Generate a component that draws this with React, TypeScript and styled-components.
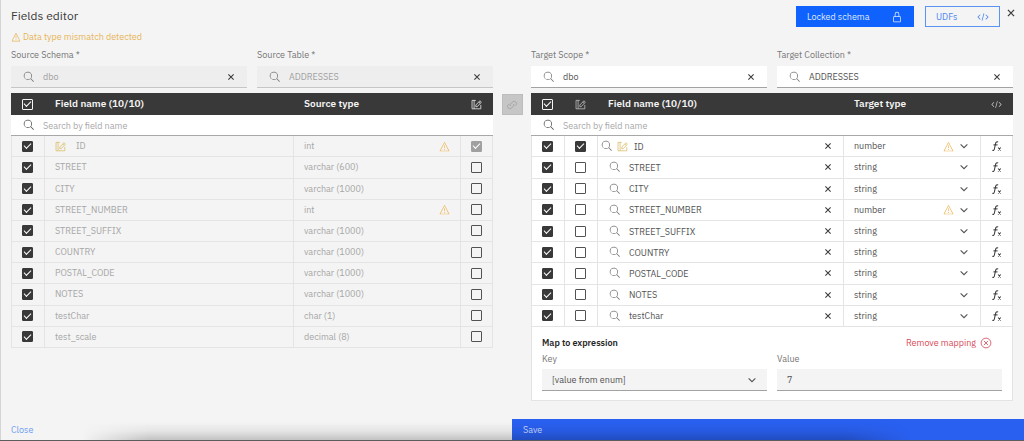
import React from "react";
import styled, { createGlobalStyle, css } from "styled-components";

const GlobalStyle = createGlobalStyle`
  *, *::before, *::after { box-sizing: border-box; }
  body {
    margin: 0;
    background: #f4f4f4;
    color: #393939;
    font-family: "IBM Plex Sans", "Inter", "Liberation Sans", sans-serif;
    font-size: 9px;
    line-height: 12px;
  }
  button, input, select { font: inherit; color: inherit; margin: 0; }
`;

/* ---------- icons ---------- */

const Svg = styled.svg<{ $size?: number; $color?: string }>`
  display: block;
  flex: none;
  width: ${(p) => p.$size ?? 12}px;
  height: ${(p) => p.$size ?? 12}px;
  fill: currentColor;
  color: ${(p) => p.$color ?? "inherit"};
`;

type IconProps = { size?: number; color?: string };

const makeIcon = (paths: string[]) => ({ size, color }: IconProps) => (
  <Svg viewBox="0 0 32 32" $size={size} $color={color} aria-hidden="true">
    {paths.map((d) => (
      <path key={d} d={d} />
    ))}
  </Svg>
);

const makeLineIcon = (paths: string[], width = 2.2) => ({ size, color }: IconProps) => (
  <Svg viewBox="0 0 32 32" $size={size} $color={color} aria-hidden="true">
    {paths.map((d) => (
      <path key={d} d={d} fill="none" stroke="currentColor" strokeWidth={width} />
    ))}
  </Svg>
);

const SearchIcon = makeIcon([
  "M29 27.586l-7.552-7.552a11.018 11.018 0 1 0-1.414 1.414L27.586 29ZM4 13a9 9 0 1 1 9 9A9.01 9.01 0 0 1 4 13Z",
]);
const CloseIcon = makeLineIcon(["M9 9l14 14M23 9l-14 14"], 2.8);
const ChevronIcon = makeLineIcon(["M7 11.5l9 9 9-9"], 2.8);
const WarningIcon = makeIcon([
  "M16 23a1.5 1.5 0 1 0 1.5 1.5A1.5 1.5 0 0 0 16 23Z",
  "M15 12h2v9h-2z",
  "M29 30H3a1 1 0 0 1-.887-1.461l13-25a1 1 0 0 1 1.774 0l13 25A1 1 0 0 1 29 30ZM4.65 28h22.7L16.002 6.171h-.004Z",
]);
const LockIcon = makeIcon([
  "M24 14h-2V8A6 6 0 0 0 10 8v6H8a2 2 0 0 0-2 2v12a2 2 0 0 0 2 2h16a2 2 0 0 0 2-2V16a2 2 0 0 0-2-2ZM12 8a4 4 0 0 1 8 0v6h-8ZM24 28H8V16h16Z",
]);
const CodeIcon = makeIcon([
  "M31 16l-7 7-1.41-1.41L28.17 16l-5.58-5.59L24 9l7 7z",
  "M1 16l7-7 1.41 1.41L3.83 16l5.58 5.59L8 23l-7-7z",
  "M12.42 25.48l5.2-19.4 1.93.52-5.2 19.4z",
]);
const EditIcon = makeLineIcon([
  "M14 4H3v24.5h25.500V17",
  "M9 4v24.5",
  "M14 22.5v-5L26 5l4 4L18 22.5z",
  "M22.500 8.500l4 4",
]);
const RemoveIcon = makeLineIcon(["M16 3a13 13 0 1 0 0 26a13 13 0 1 0 0-26z", "M10.5 10.5l11 11M21.5 10.5l-11 11"]);
const LinkIcon = makeLineIcon([
  "M12 19a6 5.500 0 0 1 1-7l3-2.500a6.500 6.500 0 0 1 12 2c.5 3-1.500 5-4.500 7",
  "M20 13a6 5.500 0 0 1-1 7l-3 2.500a6.500 6.500 0 0 1-12-2c-.5-3 1.500-5 4.500-7",
]);
const FxIcon = makeLineIcon([
  "M19 5.500c-3.500-1.500-6 0-6.800 4L9 24c-.8 3.500-2.500 4.500-5.500 3.500",
  "M6.500 13h11",
  "M19 20l7 8M26 20l-7 8",
], 2.8);

/* ---------- page frame ---------- */

const Page = styled.form`
  display: flex;
  flex-direction: column;
  min-height: 100vh;
  box-shadow: inset 1px 0 0 #d4d4d4;
  border-bottom: 1px solid #5c5c5c;
  position: relative;
  overflow: hidden;
`;

const Header = styled.header`
  display: flex;
  justify-content: space-between;
  align-items: flex-start;
  height: 31px;
  padding: 6px 6px 0 11px;
`;

const Title = styled.h1`
  margin: 0;
  font-size: 12px;
  line-height: 20px;
  font-weight: 400;
`;

const Actions = styled.div`
  display: flex;
  gap: 11px;
`;

const ActionButton = styled.button<{ $primary?: boolean }>`
  display: flex;
  align-items: center;
  justify-content: space-between;
  width: ${(p) => (p.$primary ? 118 : 75)}px;
  height: 21px;
  padding: 0 10px;
  border: 1px solid ${(p) => (p.$primary ? "#0f62fe" : "#5b93f5")};
  background: ${(p) => (p.$primary ? "#0f62fe" : "transparent")};
  color: ${(p) => (p.$primary ? "#dfe9ff" : "#4b86f0")};
`;

const IconButton = styled.button`
  display: grid;
  place-items: center;
  flex: none;
  width: 14px;
  height: 14px;
  padding: 0;
  border: 0;
  background: none;
  color: #393939;
`;

const CloseWrap = styled.div`
  margin-left: -7px;
`;

const Notice = styled.p`
  display: flex;
  align-items: center;
  gap: 2px;
  margin: 0;
  padding-left: 11px;
  line-height: 12px;
  color: #e8b557;
`;

const Columns = styled.main`
  flex: 1;
  display: grid;
  grid-template-columns: minmax(0, 1fr) 38px minmax(0, 1fr);
  align-items: start;
  padding: 6px 11px 0;
`;

const FieldPair = styled.div`
  display: grid;
  grid-template-columns: 1fr 1fr;
  gap: 10px;
`;

const Field = styled.div`
  min-width: 0;
`;

const Label = styled.label`
  display: block;
  color: #767676;
`;

/* ---------- inputs ---------- */

const InputBox = styled.div<{ $tone: "disabled" | "white" | "grey" }>`
  display: flex;
  align-items: center;
  height: 22px;
  margin-top: ${(p) => (p.$tone === "grey" ? 4 : 5)}px;
  padding: 0 9px 0 ${(p) => (p.$tone === "grey" ? 10 : 12)}px;
  border-bottom: 1px solid ${(p) => (p.$tone === "disabled" ? "#c6c6c6" : "#a2a2a2")};
  background: ${(p) => ({ disabled: "#eeeeee", white: "#ffffff", grey: "#f4f4f4" })[p.$tone]};
  color: ${(p) => (p.$tone === "disabled" ? "#a0a0a0" : "#525252")};
`;

const plainControl = css`
  flex: 1;
  min-width: 0;
  width: 100%;
  height: 18px;
  padding: 0;
  border: 0;
  outline: 0;
  background: transparent;
  appearance: none;
`;

const TextInput = styled.input<{ $indent?: number }>`
  ${plainControl}
  margin-left: ${(p) => p.$indent ?? 8}px;
  &::placeholder { color: #a8a8a8; opacity: 1; }
`;

const Select = styled.select`
  ${plainControl}
`;

const Checkbox = styled.input<{ $muted?: boolean; $outline?: boolean }>`
  appearance: none;
  display: grid;
  place-items: center;
  width: 11px;
  height: 11px;
  margin: 0 auto;
  border: 1px solid ${(p) => (p.$outline ? "#f4f4f4" : "#525252")};
  border-radius: 1px;
  &:checked {
    background: ${(p) => (p.$outline ? "transparent" : p.$muted ? "#a0a0a0" : "#393939")};
    border-color: ${(p) => (p.$outline ? "#f4f4f4" : p.$muted ? "#a0a0a0" : "#393939")};
  }
  &:checked::before {
    content: "";
    width: 7px;
    height: 4px;
    margin-top: -2px;
    border-left: 1px solid #ffffff;
    border-bottom: 1px solid #ffffff;
    transform: rotate(-45deg);
  }
`;

/* ---------- tables ---------- */

const TableWrap = styled.section`
  margin-top: 5px;
`;

const Table = styled.table<{ $live?: boolean; $height: number }>`
  width: 100%;
  height: ${(p) => p.$height}px;
  table-layout: fixed;
  border-collapse: separate;
  border-spacing: 0;
  background: ${(p) => (p.$live ? "#ffffff" : "#f4f4f4")};
  color: ${(p) => (p.$live ? "#525252" : "#a6a6a6")};
`;

const HeadRow = styled.tr`
  height: 22px;
`;

const BodyRow = styled.tr`
  height: 21px;
`;

const Th = styled.th`
  padding: 0 0 0 11px;
  background: #393939;
  color: #f4f4f4;
  font-size: 10px;
  font-weight: 600;
  text-align: left;
`;

const IconTh = styled(Th)`
  padding: 0;
  & > svg { margin: 0 auto; }
`;

const SearchTd = styled.td`
  padding: 0 12px;
  background: #ffffff;
  border-bottom: 1px solid #a8a8a8;
`;

const Td = styled.td`
  padding: 0 0 0 10px;
  border-bottom: 1px solid #e4e4e4;
  border-left: 1px solid #e4e4e4;
  &:last-child { border-right: 1px solid #e4e4e4; }
`;

const IconTd = styled(Td)`
  padding: 0 1px 0 0;
  &:last-child { padding: 0; }
  & > svg, & > button { margin: 0 auto; }
`;

const CellRow = styled.div<{ $gap?: number; $inset?: number; $end?: number }>`
  display: flex;
  align-items: center;
  gap: ${(p) => p.$gap ?? 0}px;
  padding-left: ${(p) => p.$inset ?? 0}px;
  padding-right: ${(p) => p.$end ?? 0}px;
`;

const Grow = styled.span`
  flex: 1;
`;

const NameTd = styled(Td)`
  padding: 0 8px 0 3px;
`;

const LinkButton = styled.button`
  display: grid;
  place-items: center;
  justify-self: center;
  width: 21px;
  height: 21px;
  margin-top: 45px;
  padding: 0;
  border: 1px solid #bdbdbd;
  background: #c6c6c6;
  color: #a0a0a0;
`;

/* ---------- mapping panel ---------- */

const Mapping = styled.section`
  padding: 8px 10px 9px;
  border: 1px solid #e4e4e4;
  border-top: 0;
  background: #ffffff;
`;

const MappingHead = styled.div`
  display: flex;
  align-items: center;
  justify-content: space-between;
  padding-right: 10px;
  margin-bottom: 2px;
`;

const MappingTitle = styled.h2`
  margin: 0;
  font-size: 9px;
  line-height: 16px;
  font-weight: 600;
  color: #262626;
`;

const RemoveButton = styled.button`
  display: flex;
  align-items: center;
  gap: 4px;
  padding: 0;
  border: 0;
  background: none;
  color: #d94a58;
`;

/* ---------- footer ---------- */

const Footer = styled.footer`
  display: grid;
  grid-template-columns: 1fr 1fr;
`;

const FooterButton = styled.button<{ $primary?: boolean }>`
  height: 21px;
  padding: 0 11px;
  border: 0;
  text-align: left;
  background: ${(p) => (p.$primary ? "#2a60f0" : "transparent")};
  color: ${(p) => (p.$primary ? "#c9d8ff" : "#6f9df2")};
`;

const BottomShade = styled.div`
  position: absolute;
  left: 8%;
  right: 11%;
  bottom: 0;
  height: 18px;
  background: linear-gradient(to top, rgba(0, 0, 0, 0.2), rgba(0, 0, 0, 0.06) 50%, transparent);
  mask-image: linear-gradient(to right, transparent, #000 8%, #000 92%, transparent);
  pointer-events: none;
`;

/* ---------- data ---------- */

const WARN = "#efb85c";
const EDIT = "#d9bd62";

type Row = { name: string; type: string; target?: string; warn?: boolean; mapped?: boolean };

const rows: Row[] = [
  { name: "ID", type: "int", target: "number", warn: true, mapped: true },
  { name: "STREET", type: "varchar (600)", target: "string" },
  { name: "CITY", type: "varchar (1000)", target: "string" },
  { name: "STREET_NUMBER", type: "int", target: "number", warn: true },
  { name: "STREET_SUFFIX", type: "varchar (1000)", target: "string" },
  { name: "COUNTRY", type: "varchar (1000)", target: "string" },
  { name: "POSTAL_CODE", type: "varchar (1000)", target: "string" },
  { name: "NOTES", type: "varchar (1000)", target: "string" },
  { name: "testChar", type: "char (1)", target: "string" },
  { name: "test_scale", type: "decimal (8)" },
];

function LookupField({ id, label, value, disabled }: { id: string; label: string; value: string; disabled?: boolean }) {
  return (
    <Field>
      <Label htmlFor={id}>{label}</Label>
      <InputBox $tone={disabled ? "disabled" : "white"}>
        <SearchIcon color="#767676" />
        <TextInput id={id} defaultValue={value} readOnly={disabled} />
        <IconButton type="button" aria-label={`Clear ${label}`}>
          <CloseIcon />
        </IconButton>
      </InputBox>
    </Field>
  );
}

function SearchRow({ span }: { span: number }) {
  return (
    <BodyRow>
      <SearchTd colSpan={span}>
        <CellRow>
          <SearchIcon color="#525252" />
          <TextInput aria-label="Search by field name" placeholder="Search by field name" />
        </CellRow>
      </SearchTd>
    </BodyRow>
  );
}

function SourceTable() {
  return (
    <Table $height={255}>
      <colgroup>
        <col style={{ width: 33 }} />
        <col />
        <col style={{ width: 167 }} />
        <col style={{ width: 33 }} />
      </colgroup>
      <thead>
        <HeadRow>
          <IconTh><Checkbox type="checkbox" defaultChecked $outline aria-label="Select all source fields" /></IconTh>
          <Th>Field name (10/10)</Th>
          <Th>Source type</Th>
          <IconTh><EditIcon size={11} /></IconTh>
        </HeadRow>
      </thead>
      <tbody>
        <SearchRow span={4} />
        {rows.map((row) => (
          <BodyRow key={row.name}>
            <IconTd><Checkbox type="checkbox" defaultChecked aria-label={`Include ${row.name}`} /></IconTd>
            <Td>
              <CellRow $gap={10}>
                {row.mapped && <EditIcon size={11} color={EDIT} />}
                {row.name}
              </CellRow>
            </Td>
            <Td>
              <CellRow $end={10}>
                <Grow>{row.type}</Grow>
                {row.warn && <WarningIcon size={11} color={WARN} />}
              </CellRow>
            </Td>
            <IconTd>
              <Checkbox type="checkbox" defaultChecked={row.mapped} $muted={row.mapped} aria-label={`Map ${row.name}`} />
            </IconTd>
          </BodyRow>
        ))}
      </tbody>
    </Table>
  );
}

function TargetTable() {
  return (
    <Table $live $height={234}>
      <colgroup>
        <col style={{ width: 33 }} />
        <col style={{ width: 33 }} />
        <col />
        <col style={{ width: 137 }} />
        <col style={{ width: 33 }} />
      </colgroup>
      <thead>
        <HeadRow>
          <IconTh><Checkbox type="checkbox" defaultChecked $outline aria-label="Select all target fields" /></IconTh>
          <IconTh><EditIcon size={11} color="#c6c6c6" /></IconTh>
          <Th>Field name (10/10)</Th>
          <Th>Target type</Th>
          <IconTh><CodeIcon size={11} color="#c6c6c6" /></IconTh>
        </HeadRow>
      </thead>
      <tbody>
        <SearchRow span={5} />
        {rows.filter((row) => row.target).map((row) => (
          <BodyRow key={row.name}>
            <IconTd><Checkbox type="checkbox" defaultChecked aria-label={`Include target ${row.name}`} /></IconTd>
            <IconTd><Checkbox type="checkbox" defaultChecked={row.mapped} aria-label={`Map target ${row.name}`} /></IconTd>
            <NameTd>
              <CellRow $inset={row.mapped ? 0 : 8} $gap={row.mapped ? 4 : 0}>
                <SearchIcon color="#767676" />
                {row.mapped && <EditIcon size={11} color={EDIT} />}
                <TextInput defaultValue={row.name} $indent={row.mapped ? 2 : 8} aria-label={`Target field ${row.name}`} />
                <IconButton type="button" aria-label={`Clear ${row.name}`}><CloseIcon /></IconButton>
              </CellRow>
            </NameTd>
            <Td>
              <CellRow $gap={4} $end={10}>
                <Select defaultValue={row.target} aria-label={`Type of ${row.name}`}>
                  <option>number</option>
                  <option>string</option>
                </Select>
                {row.warn && <WarningIcon size={11} color={WARN} />}
                <ChevronIcon />
              </CellRow>
            </Td>
            <IconTd>
              <IconButton type="button" aria-label={`Function for ${row.name}`}><FxIcon /></IconButton>
            </IconTd>
          </BodyRow>
        ))}
      </tbody>
    </Table>
  );
}

export default function App() {
  return (
    <>
      <GlobalStyle />
      <Page onSubmit={(e: React.FormEvent) => e.preventDefault()}>
        <Header>
          <Title>Fields editor</Title>
          <Actions>
            <ActionButton type="button" $primary>Locked schema <LockIcon /></ActionButton>
            <ActionButton type="button">UDFs <CodeIcon /></ActionButton>
            <CloseWrap>
              <IconButton type="button" aria-label="Close editor"><CloseIcon size={14} /></IconButton>
            </CloseWrap>
          </Actions>
        </Header>
        <Notice><WarningIcon size={10} /> Data type mismatch detected</Notice>
        <Columns>
          <div>
            <FieldPair>
              <LookupField id="source-schema" label="Source Schema *" value="dbo" disabled />
              <LookupField id="source-table" label="Source Table *" value="ADDRESSES" disabled />
            </FieldPair>
            <TableWrap><SourceTable /></TableWrap>
          </div>
          <LinkButton type="button" aria-label="Link tables"><LinkIcon /></LinkButton>
          <div>
            <FieldPair>
              <LookupField id="target-scope" label="Target Scope *" value="dbo" />
              <LookupField id="target-collection" label="Target Collection *" value="ADDRESSES" />
            </FieldPair>
            <TableWrap><TargetTable /></TableWrap>
            <Mapping>
              <MappingHead>
                <MappingTitle>Map to expression</MappingTitle>
                <RemoveButton type="button">Remove mapping <RemoveIcon /></RemoveButton>
              </MappingHead>
              <FieldPair>
                <Field>
                  <Label htmlFor="map-key">Key</Label>
                  <InputBox $tone="grey">
                    <Select id="map-key"><option>[value from enum]</option></Select>
                    <ChevronIcon />
                  </InputBox>
                </Field>
                <Field>
                  <Label htmlFor="map-value">Value</Label>
                  <InputBox $tone="grey"><TextInput id="map-value" defaultValue="7" $indent={0} /></InputBox>
                </Field>
              </FieldPair>
            </Mapping>
          </div>
        </Columns>
        <Footer>
          <FooterButton type="button">Close</FooterButton>
          <FooterButton type="submit" $primary>Save</FooterButton>
        </Footer>
        <BottomShade />
      </Page>
    </>
  );
}
